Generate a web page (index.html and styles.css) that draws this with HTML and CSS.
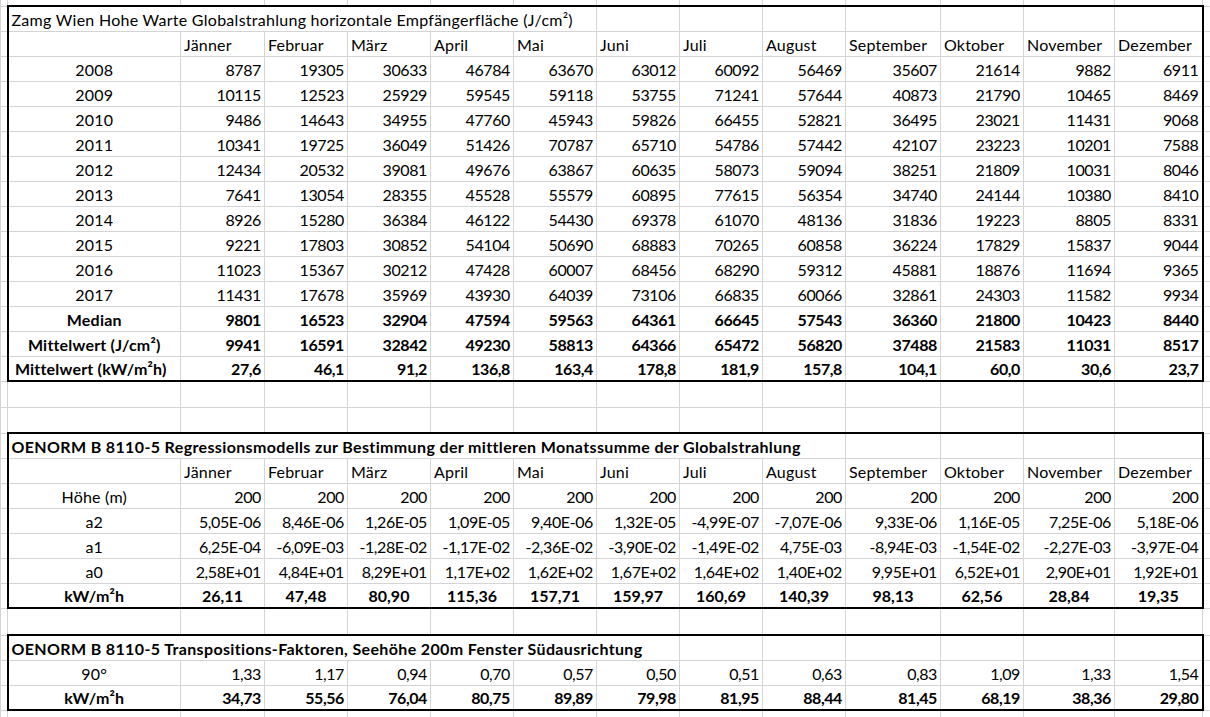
FILE: index.html
```html
<!DOCTYPE html>
<html lang="de">
<head>
<meta charset="utf-8">
<title>Globalstrahlung</title>
<link rel="stylesheet" href="styles.css">
</head>
<body>
<table class="sheet">
<colgroup>
<col class="w-a"><col class="w-b"><col class="w-c"><col class="w-83"><col class="w-83"><col class="w-83"><col class="w-83"><col class="w-83"><col class="w-83"><col class="w-83"><col class="w-k"><col class="w-83"><col class="w-m"><col class="w-n"><col class="w-o">
</colgroup>
<tbody>
<tr class="edge"><td></td><td></td><td></td><td></td><td></td><td></td><td></td><td></td><td></td><td></td><td></td><td></td><td></td><td></td><td></td></tr>

<tr class="box first"><td></td><td colspan="6" class="title">Zamg Wien Hohe Warte Globalstrahlung horizontale Empfängerfläche (J/cm²)</td><td></td><td></td><td></td><td></td><td></td><td></td><td></td><td></td></tr>
<tr class="box"><td></td><td></td><td>Jänner</td><td>Februar</td><td>März</td><td>April</td><td>Mai</td><td>Juni</td><td>Juli</td><td>August</td><td>September</td><td>Oktober</td><td>November</td><td>Dezember</td><td></td></tr>
<tr class="box num"><td></td><td class="c">2008</td><td>8787</td><td>19305</td><td>30633</td><td>46784</td><td>63670</td><td>63012</td><td>60092</td><td>56469</td><td>35607</td><td>21614</td><td>9882</td><td>6911</td><td></td></tr>
<tr class="box num"><td></td><td class="c">2009</td><td>10115</td><td>12523</td><td>25929</td><td>59545</td><td>59118</td><td>53755</td><td>71241</td><td>57644</td><td>40873</td><td>21790</td><td>10465</td><td>8469</td><td></td></tr>
<tr class="box num"><td></td><td class="c">2010</td><td>9486</td><td>14643</td><td>34955</td><td>47760</td><td>45943</td><td>59826</td><td>66455</td><td>52821</td><td>36495</td><td>23021</td><td>11431</td><td>9068</td><td></td></tr>
<tr class="box num"><td></td><td class="c">2011</td><td>10341</td><td>19725</td><td>36049</td><td>51426</td><td>70787</td><td>65710</td><td>54786</td><td>57442</td><td>42107</td><td>23223</td><td>10201</td><td>7588</td><td></td></tr>
<tr class="box num"><td></td><td class="c">2012</td><td>12434</td><td>20532</td><td>39081</td><td>49676</td><td>63867</td><td>60635</td><td>58073</td><td>59094</td><td>38251</td><td>21809</td><td>10031</td><td>8046</td><td></td></tr>
<tr class="box num"><td></td><td class="c">2013</td><td>7641</td><td>13054</td><td>28355</td><td>45528</td><td>55579</td><td>60895</td><td>77615</td><td>56354</td><td>34740</td><td>24144</td><td>10380</td><td>8410</td><td></td></tr>
<tr class="box num"><td></td><td class="c">2014</td><td>8926</td><td>15280</td><td>36384</td><td>46122</td><td>54430</td><td>69378</td><td>61070</td><td>48136</td><td>31836</td><td>19223</td><td>8805</td><td>8331</td><td></td></tr>
<tr class="box num"><td></td><td class="c">2015</td><td>9221</td><td>17803</td><td>30852</td><td>54104</td><td>50690</td><td>68883</td><td>70265</td><td>60858</td><td>36224</td><td>17829</td><td>15837</td><td>9044</td><td></td></tr>
<tr class="box num"><td></td><td class="c">2016</td><td>11023</td><td>15367</td><td>30212</td><td>47428</td><td>60007</td><td>68456</td><td>68290</td><td>59312</td><td>45881</td><td>18876</td><td>11694</td><td>9365</td><td></td></tr>
<tr class="box num"><td></td><td class="c">2017</td><td>11431</td><td>17678</td><td>35969</td><td>43930</td><td>64039</td><td>73106</td><td>66835</td><td>60066</td><td>32861</td><td>24303</td><td>11582</td><td>9934</td><td></td></tr>
<tr class="box num bold"><td></td><td class="c">Median</td><td>9801</td><td>16523</td><td>32904</td><td>47594</td><td>59563</td><td>64361</td><td>66645</td><td>57543</td><td>36360</td><td>21800</td><td>10423</td><td>8440</td><td></td></tr>
<tr class="box num bold"><td></td><td class="c">Mittelwert (J/cm²)</td><td>9941</td><td>16591</td><td>32842</td><td>49230</td><td>58813</td><td>64366</td><td>65472</td><td>56820</td><td>37488</td><td>21583</td><td>11031</td><td>8517</td><td></td></tr>
<tr class="box num bold last"><td></td><td class="c lbl-wide">Mittelwert (kW/m²h)</td><td>27,6</td><td>46,1</td><td>91,2</td><td>136,8</td><td>163,4</td><td>178,8</td><td>181,9</td><td>157,8</td><td>104,1</td><td>60,0</td><td>30,6</td><td>23,7</td><td></td></tr>

<tr class="gap"><td></td><td></td><td></td><td></td><td></td><td></td><td></td><td></td><td></td><td></td><td></td><td></td><td></td><td></td><td></td></tr>
<tr class="gap"><td></td><td></td><td></td><td></td><td></td><td></td><td></td><td></td><td></td><td></td><td></td><td></td><td></td><td></td><td></td></tr>

<tr class="box first bold"><td></td><td colspan="9" class="title">OENORM B 8110-5 Regressionsmodells zur Bestimmung der mittleren Monatssumme der Globalstrahlung</td><td></td><td></td><td></td><td></td><td></td></tr>
<tr class="box"><td></td><td></td><td>Jänner</td><td>Februar</td><td>März</td><td>April</td><td>Mai</td><td>Juni</td><td>Juli</td><td>August</td><td>September</td><td>Oktober</td><td>November</td><td>Dezember</td><td></td></tr>
<tr class="box num"><td></td><td class="c">Höhe (m)</td><td>200</td><td>200</td><td>200</td><td>200</td><td>200</td><td>200</td><td>200</td><td>200</td><td>200</td><td>200</td><td>200</td><td>200</td><td></td></tr>
<tr class="box num"><td></td><td class="c">a2</td><td>5,05E-06</td><td>8,46E-06</td><td>1,26E-05</td><td>1,09E-05</td><td>9,40E-06</td><td>1,32E-05</td><td>-4,99E-07</td><td>-7,07E-06</td><td>9,33E-06</td><td>1,16E-05</td><td>7,25E-06</td><td>5,18E-06</td><td></td></tr>
<tr class="box num"><td></td><td class="c">a1</td><td>6,25E-04</td><td>-6,09E-03</td><td>-1,28E-02</td><td>-1,17E-02</td><td>-2,36E-02</td><td>-3,90E-02</td><td>-1,49E-02</td><td>4,75E-03</td><td>-8,94E-03</td><td>-1,54E-02</td><td>-2,27E-03</td><td>-3,97E-04</td><td></td></tr>
<tr class="box num"><td></td><td class="c">a0</td><td>2,58E+01</td><td>4,84E+01</td><td>8,29E+01</td><td>1,17E+02</td><td>1,62E+02</td><td>1,67E+02</td><td>1,64E+02</td><td>1,40E+02</td><td>9,95E+01</td><td>6,52E+01</td><td>2,90E+01</td><td>1,92E+01</td><td></td></tr>
<tr class="box ctr bold last"><td></td><td class="c">kW/m²h</td><td>26,11</td><td>47,48</td><td>80,90</td><td>115,36</td><td>157,71</td><td>159,97</td><td>160,69</td><td>140,39</td><td>98,13</td><td>62,56</td><td>28,84</td><td>19,35</td><td></td></tr>

<tr class="gap2"><td></td><td></td><td></td><td></td><td></td><td></td><td></td><td></td><td></td><td></td><td></td><td></td><td></td><td></td><td></td></tr>

<tr class="box first bold"><td></td><td colspan="7" class="title">OENORM B 8110-5 Transpositions-Faktoren, Seehöhe 200m Fenster Südausrichtung</td><td></td><td></td><td></td><td></td><td></td><td></td><td></td></tr>
<tr class="box num"><td></td><td class="c">90°</td><td>1,33</td><td>1,17</td><td>0,94</td><td>0,70</td><td>0,57</td><td>0,50</td><td>0,51</td><td>0,63</td><td>0,83</td><td>1,09</td><td>1,33</td><td>1,54</td><td></td></tr>
<tr class="box num bold last"><td></td><td class="c">kW/m²h</td><td>34,73</td><td>55,56</td><td>76,04</td><td>80,75</td><td>89,89</td><td>79,98</td><td>81,95</td><td>88,44</td><td>81,45</td><td>68,19</td><td>38,36</td><td>29,80</td><td></td></tr>

<tr class="edge2"><td></td><td></td><td></td><td></td><td></td><td></td><td></td><td></td><td></td><td></td><td></td><td></td><td></td><td></td><td></td></tr>
</tbody>
</table>
</body>
</html>
```
FILE: styles.css
```css
html, body {
  margin: 0;
  padding: 0;
  background: #ffffff;
  overflow: hidden;
}

body {
  font-family: Lato, "Liberation Sans", sans-serif;
  font-size: 16px;
  color: #000000;
}

.sheet {
  border-collapse: collapse;
  table-layout: fixed;
  width: 1222px;
}

.w-a { width: 7px; }
.w-b { width: 173px; }
.w-c { width: 84px; }
.w-83 { width: 83px; }
.w-k { width: 95px; }
.w-m { width: 91px; }
.w-n { width: 88px; }
.w-o { width: 20px; }

.sheet td {
  border: 1px solid #d4d4d4;
  padding: 0 3px 2px 3px;
  white-space: nowrap;
  overflow: hidden;
  vertical-align: bottom;
  line-height: 18px;
  text-align: left;
  letter-spacing: 0.2px;
}

.sheet tr { height: 25px; }
.sheet tr.edge { height: 6px; }
.sheet tr.edge td { border-top: none; }
.sheet tr.gap { height: 26px; }
.sheet tr.gap2 { height: 27px; }
.sheet tr.edge2 { height: 10px; }

.sheet td.title { overflow: visible; letter-spacing: 0.27px; }
.bold td.title { letter-spacing: 0.36px; }

.num td { text-align: right; letter-spacing: -0.4px; }
.ctr td { text-align: center; letter-spacing: 0; }
.sheet td.c { text-align: center; letter-spacing: 0.2px; }
.sheet td.lbl-wide { padding-right: 10px; }
.bold td { font-weight: 700; }

.box > td:nth-child(2) { border-left: 2px solid #000; }
.box > td:nth-last-child(2) { border-right: 2px solid #000; }
.first > td:not(:first-child):not(:last-child) { border-top: 2px solid #000; }
.last > td:not(:first-child):not(:last-child) { border-bottom: 2px solid #000; }
```
